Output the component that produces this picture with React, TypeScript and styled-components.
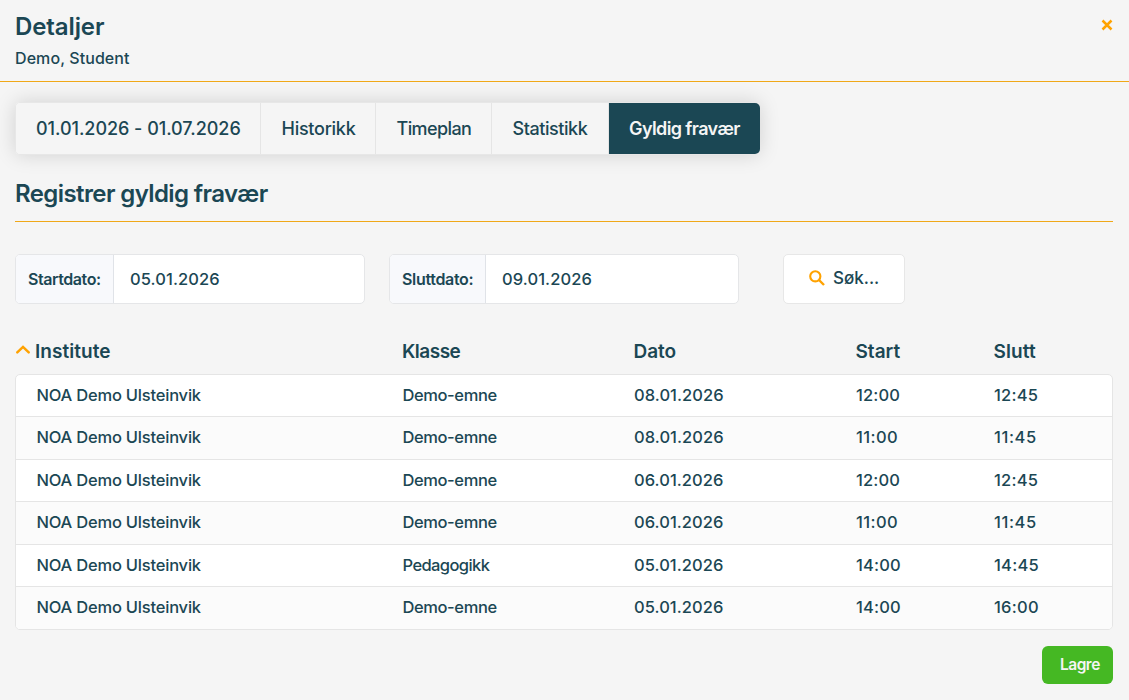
import React from 'react';
import styled, { createGlobalStyle } from 'styled-components';

const GlobalStyle = createGlobalStyle`
  *, *::before, *::after { box-sizing: border-box; }
  body {
    margin: 0;
    background: #f5f5f5;
    color: #1b4754;
    font-family: Inter, "Liberation Sans", sans-serif;
    font-weight: 500;
  }
  button { font: inherit; color: inherit; cursor: pointer; }
`;

const Dialog = styled.div`
  height: 700px;
  display: flex;
  flex-direction: column;
  overflow: hidden;
`;

const Header = styled.header`
  height: 82px;
  flex: none;
  display: flex;
  justify-content: space-between;
  align-items: flex-start;
  padding: 11px 16px 0 15px;
  border-bottom: 1px solid #f0a818;
`;

const Title = styled.h1`
  margin: 0;
  font-size: 24px;
  line-height: 31px;
  font-weight: 600;
  letter-spacing: -0.1px;
`;

const Subtitle = styled.div`
  margin-top: 4px;
  font-size: 16px;
  line-height: 24px;
  letter-spacing: 0.08px;
`;

const CloseButton = styled.button`
  display: flex;
  margin-top: 8px;
  padding: 0;
  border: 0;
  background: none;
`;

const Content = styled.main`
  padding: 20px 16px 0 15px;
  display: flex;
  flex-direction: column;
`;

const Tabs = styled.nav`
  align-self: flex-start;
  display: flex;
  height: 53px;
  border: 1px solid #e7e7e7;
  border-radius: 5px;
  box-shadow: 0 0 20px rgba(0, 0, 0, 0.15);
`;

const Tab = styled.button<{ $width: number; $spacing: number; $active?: boolean }>`
  width: ${(p) => p.$width}px;
  padding: 0 0 1px 20.5px;
  text-align: left;
  white-space: nowrap;
  border: 0;
  border-right: 1px solid #e5e5e5;
  background: #f5f5f5;
  font-size: 18px;
  letter-spacing: ${(p) => p.$spacing}px;
  &:first-child { border-radius: 4px 0 0 4px; padding-left: 20px; }
  ${(p) => p.$active && `
    margin: 0 -1px 0 0;
    padding-left: 20px;
    border: 0;
    border-radius: 0 5px 5px 0;
    background: #1b4754;
    color: #f5f5f5;
    font-weight: 600;
  `}
`;

const SectionTitle = styled.h2`
  margin: 20px 0 0;
  height: 47px;
  padding-top: 3px;
  border-bottom: 1px solid #f0a818;
  font-size: 24px;
  line-height: 31px;
  font-weight: 600;
  letter-spacing: -0.6px;
`;

const Filters = styled.div`
  display: flex;
  height: 50px;
  margin-top: 32px;
`;

const DateField = styled.label`
  display: flex;
  width: 350px;
  margin-right: 24px;
  border: 1px solid #e5e6e8;
  border-radius: 5px;
  background: #fff;
  overflow: hidden;
`;

const DateLabel = styled.span<{ $width: number; $spacing: number }>`
  width: ${(p) => p.$width}px;
  padding-left: 12px;
  border-right: 1px solid #e0e3e8;
  background: #f8f9fc;
  font-size: 16px;
  line-height: 48px;
  font-weight: 600;
  white-space: nowrap;
  letter-spacing: ${(p) => p.$spacing}px;
`;

const DateValue = styled.span`
  padding-left: 16px;
  font-size: 16.5px;
  line-height: 49px;
  letter-spacing: 0.09px;
`;

const SearchButton = styled.button`
  display: flex;
  align-items: center;
  gap: 8.5px;
  width: 122px;
  margin-left: 20px;
  padding: 0 0 2px 24.5px;
  border: 1px solid #e7e7e7;
  border-radius: 5px;
  background: #fff;
  font-size: 17px;
`;

const columns = 'grid-template-columns: 366px 231.5px 222px 138px 1fr;';

const TableHead = styled.div`
  display: grid;
  ${columns}
  margin-top: 34px;
  padding-left: 21px;
  height: 36px;
  line-height: 27px;
  font-size: 19px;
  font-weight: 600;
`;

const HeadCell = styled.div<{ $spacing: number; $sorted?: boolean }>`
  display: flex;
  align-items: flex-start;
  letter-spacing: ${(p) => p.$spacing}px;
  ${(p) => p.$sorted && 'margin-left: -20px; gap: 5px;'}
  svg { margin-top: 7px; }
`;

const TableBody = styled.div`
  border: 1px solid #e5e5e5;
  border-radius: 5px;
  background: #fff;
  overflow: hidden;
`;

const Row = styled.div`
  display: grid;
  ${columns}
  height: 42px;
  padding-left: 20.5px;
  font-size: 16.5px;
  line-height: 40px;
  & + & { border-top: 1px solid #e5e5e5; }
  &:nth-child(even) { height: 43px; background: #fbfbfb; }
  &:first-child { height: 41px; }
`;

const Cell = styled.span<{ $spacing?: number }>`
  letter-spacing: ${(p) => p.$spacing ?? 0.05}px;
`;

const SaveButton = styled.button`
  align-self: flex-end;
  width: 71px;
  height: 38px;
  margin-top: 16px;
  padding: 0 0 1px 18px;
  text-align: left;
  border: 0;
  border-radius: 6px;
  background: #45b823;
  color: #f5f5f5;
  font-size: 15.5px;
  font-weight: 600;
  letter-spacing: -0.5px;
`;

const rows = [
  ['Demo-emne', '08.01.2026', '12:00', '12:45'],
  ['Demo-emne', '08.01.2026', '11:00', '11:45'],
  ['Demo-emne', '06.01.2026', '12:00', '12:45'],
  ['Demo-emne', '06.01.2026', '11:00', '11:45'],
  ['Pedagogikk', '05.01.2026', '14:00', '14:45'],
  ['Demo-emne', '05.01.2026', '14:00', '16:00'],
];

export default function App() {
  return (
    <Dialog>
      <GlobalStyle />
      <Header>
        <div>
          <Title>Detaljer</Title>
          <Subtitle>Demo, Student</Subtitle>
        </div>
        <CloseButton aria-label="Lukk">
          <svg width="12" height="12" viewBox="0 0 12 12" fill="none" stroke="#ffa200" strokeWidth="2.5">
            <path d="M1.5 1.5l9 9M10.5 1.5l-9 9" />
          </svg>
        </CloseButton>
      </Header>
      <Content>
        <Tabs>
          <Tab $width={245} $spacing={-0.04}>01.01.2026 - 01.07.2026</Tab>
          <Tab $width={115} $spacing={-0.26}>Historikk</Tab>
          <Tab $width={116} $spacing={-0.6}>Timeplan</Tab>
          <Tab $width={117} $spacing={-0.44}>Statistikk</Tab>
          <Tab $width={151} $spacing={-0.6} $active>Gyldig fravær</Tab>
        </Tabs>
        <SectionTitle>Registrer gyldig fravær</SectionTitle>
        <Filters>
          <DateField>
            <DateLabel $width={98} $spacing={-0.43}>Startdato:</DateLabel>
            <DateValue>05.01.2026</DateValue>
          </DateField>
          <DateField>
            <DateLabel $width={96} $spacing={-0.33}>Sluttdato:</DateLabel>
            <DateValue>09.01.2026</DateValue>
          </DateField>
          <SearchButton>
            <svg width="16" height="16" viewBox="0 0 16 16" fill="none" stroke="#ffa200" strokeWidth="2.1">
              <circle cx="6.3" cy="6.3" r="5.1" />
              <path d="M10 10l5 5" strokeWidth="2.4" />
            </svg>
            Søk...
          </SearchButton>
        </Filters>
        <TableHead>
          <HeadCell $spacing={0.05} $sorted>
            <svg width="14" height="9" viewBox="0 0 14 9" fill="none" stroke="#ffa200" strokeWidth="2.5" strokeLinecap="round">
              <path d="M1.3 7.4L7 1.9l5.7 5.5" />
            </svg>
            Institute
          </HeadCell>
          <HeadCell $spacing={-0.5}>Klasse</HeadCell>
          <HeadCell $spacing={-0.05}>Dato</HeadCell>
          <HeadCell $spacing={0}>Start</HeadCell>
          <HeadCell $spacing={0.1}>Slutt</HeadCell>
        </TableHead>
        <TableBody>
          {rows.map(([klasse, dato, start, slutt], i) => (
            <Row key={i}>
              <Cell $spacing={-0.21}>NOA Demo Ulsteinvik</Cell>
              <Cell $spacing={klasse === 'Pedagogikk' ? -0.6 : -0.4}>{klasse}</Cell>
              <Cell>{dato}</Cell>
              <Cell $spacing={start.startsWith('11') ? 0.4 : 0.15}>{start}</Cell>
              <Cell $spacing={slutt.startsWith('11') ? 0.6 : 0.25}>{slutt}</Cell>
            </Row>
          ))}
        </TableBody>
        <SaveButton>Lagre</SaveButton>
      </Content>
    </Dialog>
  );
}
